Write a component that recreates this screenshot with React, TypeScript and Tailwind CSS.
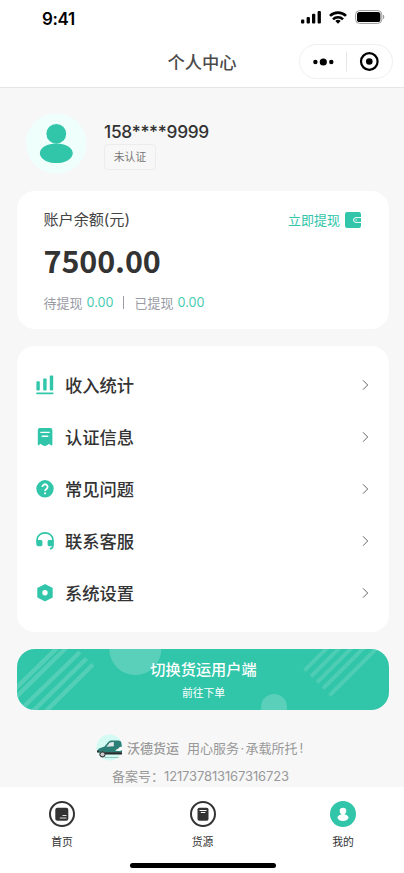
import type { ReactNode } from "react";

function SignalIcon() {
  return (
    <svg width="20" height="14" viewBox="0 0 20 14" fill="#000">
      <rect x="0" y="9.5" width="3.3" height="4" rx="1" />
      <rect x="5.6" y="7" width="3.3" height="6.5" rx="1" />
      <rect x="11" y="3.8" width="3.3" height="9.7" rx="1" />
      <rect x="16.6" y="1" width="3.3" height="12.5" rx="1" />
    </svg>
  );
}

function WifiIcon() {
  return (
    <svg width="18" height="13" viewBox="0 0 18 13" fill="none" stroke="#000" strokeWidth="2.6">
      <path d="M1 4.9a11.3 11.3 0 0 1 16 0" />
      <path d="M4 8.3a7 7 0 0 1 10 0" />
      <path d="M9 12.8 6.3 10a3.9 3.9 0 0 1 5.4 0Z" fill="#000" stroke="none" />
    </svg>
  );
}

function BatteryIcon() {
  return (
    <svg width="30" height="14" viewBox="0 0 30 14">
      <rect x="0.6" y="0.6" width="26.2" height="12.8" rx="4" fill="none" stroke="#999" />
      <rect x="2" y="2" width="23.4" height="10" rx="2.6" fill="#000" />
      <path d="M28 4.8c1.7.6 1.7 3.8 0 4.4Z" fill="#999" />
    </svg>
  );
}

function StatusBar() {
  return (
    <div className="flex h-[38px] items-center justify-between pl-[42px] pr-[19px]">
      <span className="text-[17px] font-semibold leading-none tracking-[-0.4px] text-black">9:41</span>
      <div className="flex items-center gap-[8px] pb-[4px]">
        <SignalIcon />
        <WifiIcon />
        <BatteryIcon />
      </div>
    </div>
  );
}

function Capsule() {
  return (
    <div className="absolute left-[299px] top-[44px] flex h-[35px] w-[94px] items-center rounded-full border border-[#efefef] bg-white">
      <svg width="92" height="33" viewBox="0 0 92 33">
        <circle cx="15.4" cy="17" r="2.2" />
        <circle cx="23.3" cy="17" r="3.6" />
        <circle cx="31.3" cy="17" r="2.2" />
        <path d="M46.5 6.5v20" stroke="#e6e6e6" />
        <circle cx="69.3" cy="16.5" r="8.3" fill="none" stroke="#000" strokeWidth="2.2" />
        <circle cx="69.3" cy="16.5" r="3.3" />
      </svg>
    </div>
  );
}

function Header() {
  return (
    <header className="relative h-[88px] border-b border-[#e6e6e6] bg-white">
      <StatusBar />
      <h1 className="pt-[12px] text-center text-[17.3px] font-medium leading-[26px] text-[#4a4a4a]">个人中心</h1>
      <Capsule />
    </header>
  );
}

function Profile() {
  return (
    <section className="flex h-[103px] pl-[26px] pt-[25px]">
      <svg width="61" height="61" viewBox="0 0 61 61">
        <circle cx="30.2" cy="30.6" r="30.2" fill="#effffc" />
        <circle cx="30.3" cy="20.8" r="9.9" fill="#31c5a9" />
        <ellipse cx="30.3" cy="40.2" rx="16.4" ry="9.8" fill="#31c5a9" />
      </svg>
      <div className="flex flex-col items-start pl-[17px] pt-[8px]">
        <span className="text-[17.3px] font-medium leading-[22px] tracking-[-0.28px] text-[#333]">158****9999</span>
        <span className="mt-[1px] flex h-[26px] w-[52px] items-center justify-center rounded-[4px] border border-[#ececec] pt-[2px] text-[10.8px] text-[#777]">
          未认证
        </span>
      </div>
    </section>
  );
}

function WalletIcon() {
  return (
    <svg width="16" height="16" viewBox="0 0 16 16">
      <rect width="16" height="16" rx="2.2" fill="#31c5a9" />
      <path d="M16 5.6h-5a2.4 2.4 0 0 0 0 4.8h5" fill="none" stroke="#fff" />
      <circle cx="11.2" cy="8" r="0.8" fill="#d5f3ed" />
    </svg>
  );
}

function BalanceCard() {
  return (
    <section className="ml-[17px] h-[138px] w-[372px] rounded-[18px] bg-white pl-[26.5px] pr-[28px] pt-[17px]">
      <div className="flex items-center justify-between">
        <span className="text-[15.2px] leading-[24px] tracking-[-0.1px] text-[#444]">账户余额(元)</span>
        <span className="flex items-center gap-[5px] text-[13px] leading-[24px] text-[#31c5a9]">
          立即提现
          <WalletIcon />
        </span>
      </div>
      <div className="mt-[9px] font-['Noto_Sans_CJK_SC'] text-[30.5px] font-bold leading-[38px] tracking-[-0.1px] text-[#333]">
        7500.00
      </div>
      <div className="mt-[13px] flex items-center text-[13px] leading-[20px] text-[#9a9ba5]">
        <span>待提现</span>
        <span className="ml-[4px] pt-[1px] text-[12.7px] text-[#45cbb1]">0.00</span>
        <span className="ml-[9px] mr-[11px] h-[13px] w-px bg-[#9a9ba5]" />
        <span>已提现</span>
        <span className="ml-[4px] pt-[1px] text-[12.7px] text-[#45cbb1]">0.00</span>
      </div>
    </section>
  );
}

function StatsIcon() {
  return (
    <svg width="18" height="20" viewBox="0 0 18 20" fill="#31c5a9">
      <rect x="0.4" y="6.2" width="3.4" height="9.4" rx="0.8" />
      <rect x="7.2" y="3.4" width="3.4" height="12.2" rx="0.8" />
      <rect x="13.8" y="0.4" width="3.4" height="15.2" rx="0.8" />
      <rect x="0.3" y="17.6" width="17.2" height="1.6" rx="0.5" />
    </svg>
  );
}

function ReceiptIcon() {
  return (
    <svg width="18" height="20" viewBox="0 0 18 20">
      <path
        d="M3.4 1h10.8a2.2 2.2 0 0 1 2.2 2.2V18l-1.2.4-2.2-1.6-1.8 1.5-1 .1-1.4.9-1.4-.9-1-.1-1.8-1.5-2.200 1.600-.6-.4V3.200A2.200 2.200 0 0 1 3.400 1Z"
        fill="#31c5a9"
      />
      <path d="M4.900 5.400h8.200M6.200 9.200h5.600" stroke="#fff" strokeWidth="1.4" strokeLinecap="round" />
    </svg>
  );
}

function HelpIcon() {
  return (
    <svg width="18" height="20" viewBox="0 0 18 20">
      <circle cx="9" cy="9.8" r="8.7" fill="#31c5a9" />
      <path d="M6.400 7.900a2.600 2.600 0 1 1 4 2.200c-.9.6-1.300 1-1.300 1.800" fill="none" stroke="#fff" strokeWidth="1.8" />
      <circle cx="9.1" cy="14.3" r="1.1" fill="#fff" />
    </svg>
  );
}

function HeadsetIcon() {
  return (
    <svg width="18" height="20" viewBox="0 0 18 20">
      <path
        d="M1.100 12V8.800C1.100 4.600 4.600 1.900 9 1.900s7.900 2.700 7.900 6.900V15c0 1.800-1 2.500-3 2.900"
        fill="none"
        stroke="#31c5a9"
        strokeWidth="1.6"
      />
      <path
        d="M.4 9h4.200c1.200 0 1.800.6 1.800 1.600v3.200c0 .9-.6 1.400-1.600 1.400H2.200c-1.100 0-1.800-.6-1.800-1.700ZM17.600 9h-4.200c-1.200 0-1.800.6-1.800 1.600v3.200c0 .9.600 1.400 1.600 1.400h2.600c1.100 0 1.800-.6 1.800-1.700Z"
        fill="#31c5a9"
      />
    </svg>
  );
}

function SettingsIcon() {
  return (
    <svg width="18" height="20" viewBox="0 0 18 20">
      <path
        d="m9 1.800 7 3.500v8.800l-7 3.500-7-3.500V5.300Z"
        fill="#31c5a9"
        stroke="#31c5a9"
        strokeWidth="1.4"
        strokeLinejoin="round"
      />
      <circle cx="9" cy="9.7" r="2.7" fill="#fff" />
    </svg>
  );
}

const menu: { label: string; icon: ReactNode }[] = [
  { label: "收入统计", icon: <StatsIcon /> },
  { label: "认证信息", icon: <ReceiptIcon /> },
  { label: "常见问题", icon: <HelpIcon /> },
  { label: "联系客服", icon: <HeadsetIcon /> },
  { label: "系统设置", icon: <SettingsIcon /> },
];

function MenuCard() {
  return (
    <section className="ml-[17px] mt-[17px] h-[286px] w-[372px] rounded-[18px] bg-white pt-[13px]">
      {menu.map((item) => (
        <div key={item.label} className="flex h-[52px] items-center pl-[19px] pr-[20px]">
          {item.icon}
          <span className="ml-[11px] flex-1 pt-[2px] text-[17.3px] font-medium text-[#333]">{item.label}</span>
          <svg width="7" height="12" viewBox="0 0 7 12" fill="none" stroke="#666">
            <path d="m1 1.300 4.700 4.700L1 10.700" />
          </svg>
        </div>
      ))}
    </section>
  );
}

function SwitchBanner() {
  return (
    <section className="relative ml-[17px] mt-[17px] h-[60.5px] w-[372px] overflow-hidden rounded-[18px] bg-[#31c5a9] text-center text-white">
      <svg className="absolute inset-0" width="372" height="61" viewBox="0 0 372 61">
        <g stroke="#fff" strokeOpacity="0.17" strokeWidth="4.4">
          <path d="M43-4-6 44M52-4-6 53M63 3-3 67M69.500 9.500 9 69M76 15.500 22 69" />
        </g>
        <circle cx="118.3" cy="0" r="26" fill="#fff" fillOpacity="0.2" />
        <circle cx="257" cy="58" r="13" fill="#fff" fillOpacity="0.2" />
        <g stroke="#fff" strokeOpacity="0.14" strokeWidth="4">
          <path d="m287.500 21.500 26-26M294 27.500l32-32M300 33.500l38-38M306 39.500l44-44M312.500 46.500l51-51" />
        </g>
      </svg>
      <div className="relative pl-[1px] pt-[9px]">
        <p className="text-[15.2px] font-medium leading-[24px]">切换货运用户端</p>
        <p className="mt-[3px] text-[10.8px] leading-[18px]">前往下单</p>
      </div>
    </section>
  );
}

function BrandLogo() {
  return (
    <svg width="28" height="28" viewBox="0 0 28 28">
      <circle cx="13.5" cy="13.5" r="13" fill="#d3fbf4" />
      <path
        d="M1.200 17 3 14.400l5.500-1.800 3.500-4.400c1-1.100 2.200-1.600 3.800-1.600h6.400c1.700 0 2.800.7 3.100 2.200l.7 4.700v4.500l-2 .8H3Z"
        fill="#2c7f76"
      />
      <path d="m10.400 12.800 3.200-4.100c1.100-.6 2.600-.8 4.200-.7v4.300Z" fill="#e4e7e7" />
      <path d="M19.300 16.800c.8-2 2.600-1.300 3.300-2.600.9-1.300 2-1.800 3.600-1.400v3.300l-2.100.9Z" fill="#fff" />
      <path d="M5 18.300h21v2.200H9Z" fill="#272c2c" />
      <path d="M1 16.500h2.200v2H1z" fill="#333" />
      <circle cx="6.5" cy="20.3" r="3.1" fill="#444" />
      <circle cx="6.5" cy="20.3" r="1.9" fill="#ccc" />
      <path d="M8.500 23.500h14" stroke="#83bdb5" strokeWidth="0.8" />
    </svg>
  );
}

function Footer() {
  return (
    <footer className="h-[77.5px] pt-[24.5px] text-[#999]">
      <div className="flex h-[28px] items-center pl-[96px] text-[13px]">
        <BrandLogo />
        <span className="ml-[3px] pt-[1px] font-medium">沃德货运</span>
        <span className="ml-[8px] whitespace-nowrap pt-[1px]">
          用心服务<span className="mx-[1.4px]">·</span>承载所托<span className="ml-[2px]">!</span>
        </span>
      </div>
      <p className="flex h-[28px] items-center pl-[112px] pt-[1px] text-[13px]">
        备案号：<span className="tracking-[-0.14px]">121737813167316723</span>
      </p>
    </footer>
  );
}

function HomeTabIcon() {
  return (
    <svg width="26" height="26" viewBox="0 0 26 26">
      <circle cx="13" cy="13" r="12" fill="none" stroke="#333" strokeWidth="2" />
      <rect x="6.3" y="6.8" width="13" height="13" rx="2" fill="#333" />
      <path d="M13.500 14.500H17.500M10.800 17H17.500" stroke="#ddd" />
    </svg>
  );
}

function GoodsTabIcon() {
  return (
    <svg width="26" height="26" viewBox="0 0 26 26">
      <circle cx="13" cy="13" r="12" fill="none" stroke="#333" strokeWidth="2" />
      <rect x="7.5" y="6.8" width="11" height="13" rx="1.8" fill="#333" />
      <path d="M9.500 9.500h7M10.800 11.500h4.500" stroke="#fff" />
    </svg>
  );
}

function MineTabIcon() {
  return (
    <svg width="26" height="26" viewBox="0 0 26 26">
      <circle cx="13" cy="13" r="13" fill="#31c5a9" />
      <circle cx="13" cy="10" r="3.3" fill="#fff" />
      <path d="M11.500 12h3v3h-3z" fill="#fff" />
      <ellipse cx="13" cy="16.6" rx="5.5" ry="3.3" fill="#fff" />
    </svg>
  );
}

const tabs: { label: string; icon: ReactNode }[] = [
  { label: "首页", icon: <HomeTabIcon /> },
  { label: "货源", icon: <GoodsTabIcon /> },
  { label: "我的", icon: <MineTabIcon /> },
];

function TabBar() {
  return (
    <nav className="h-[86px] bg-white">
      <div className="flex justify-between pl-[41px] pr-[40px] pt-[14px]">
        {tabs.map((tab) => (
          <div key={tab.label} className="flex w-[42px] flex-col items-center">
            {tab.icon}
            <span className="mt-[8px] text-[10.8px] leading-[16px] text-[#333]">{tab.label}</span>
          </div>
        ))}
      </div>
      <div className="ml-[130px] mt-[12px] h-[5px] w-[146px] rounded-full bg-black" />
    </nav>
  );
}

export default function App() {
  return (
    <div className="h-[873px] w-[404px] overflow-hidden bg-[#f7f7f7] font-[Inter,'Noto_Sans_CJK_SC',sans-serif]">
      <Header />
      <Profile />
      <BalanceCard />
      <MenuCard />
      <SwitchBanner />
      <Footer />
      <TabBar />
    </div>
  );
}
